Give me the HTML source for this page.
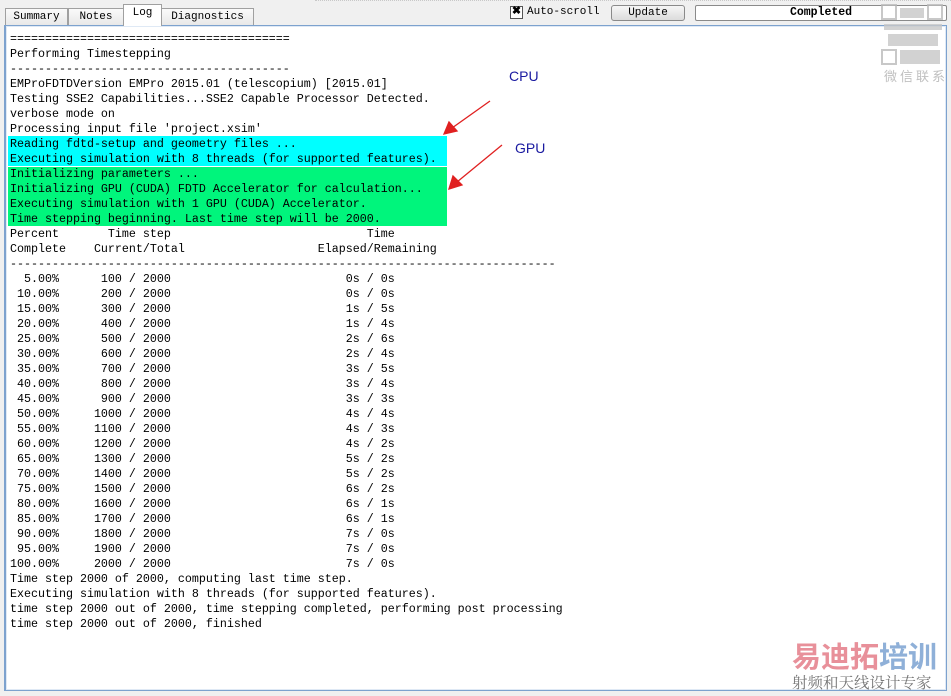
<!DOCTYPE html>
<html><head><meta charset="utf-8"><style>
body{margin:0;width:951px;height:696px;background:#f0f0f0;position:relative;overflow:hidden;font-family:"Liberation Mono",monospace}
.topline{position:absolute;left:315px;top:0;width:640px;height:0;border-top:1px dotted #c8c8c8}
.tab{position:absolute;top:8px;height:16px;border:1px solid #a0a0a0;border-bottom:none;background:linear-gradient(#fafafa,#e8e8e8);font-size:11px;line-height:16px;text-align:center;color:#000}
.tab.sel{top:4px;height:21px;background:#fff;z-index:2}
.log{position:absolute;left:4px;top:25px;width:940px;height:664px;border:1px solid #7da2ce;border-left:2px solid #7da2ce;background:#fff;box-shadow:inset 0 0 0 1px #dfe9f5}
pre{position:absolute;left:10px;top:32px;margin:0;font-family:"Liberation Mono",monospace;font-size:11.67px;line-height:15px;color:#000;z-index:2}
.hl{position:absolute;left:8px;width:439px}
.lbl{position:absolute;font-family:"Liberation Sans",Arial,sans-serif;font-size:14px;color:#1a1aa0}
.btn{position:absolute;top:5px;height:14px;border:1px solid #8a8a8a;border-radius:3px;background:linear-gradient(#f6f6f6,#dcdcdc);font-size:11px;line-height:14px;text-align:center}
</style></head><body>
<div class="topline"></div>
<div class="tab" style="left:5px;width:61px">Summary</div>
<div class="tab" style="left:68px;width:54px">Notes</div>
<div class="tab sel" style="left:123px;width:37px">Log</div>
<div class="tab" style="left:161px;width:91px">Diagnostics</div>
<div style="position:absolute;left:510px;top:6px;width:11px;height:11px;border:1px solid #555;background:#fff;font-size:11px;line-height:11px;text-align:center;font-weight:bold">✖</div>
<div style="position:absolute;left:527px;top:5px;font-size:11px;line-height:14px">Auto-scroll</div>
<div class="btn" style="left:611px;width:72px">Update</div>
<div class="btn" style="left:695px;width:250px;background:#fff;border-radius:2px;font-weight:bold;font-size:11.5px">Completed</div>
<div class="log"></div>
<div class="hl" style="top:136px;height:30px;background:#00ffff"></div>
<div class="hl" style="top:167px;height:59px;background:#00f57c"></div>
<pre>========================================
Performing Timestepping
----------------------------------------
EMProFDTDVersion EMPro 2015.01 (telescopium) [2015.01]
Testing SSE2 Capabilities...SSE2 Capable Processor Detected.
verbose mode on
Processing input file 'project.xsim'
Reading fdtd-setup and geometry files ...
Executing simulation with 8 threads (for supported features).
Initializing parameters ...
Initializing GPU (CUDA) FDTD Accelerator for calculation...
Executing simulation with 1 GPU (CUDA) Accelerator.
Time stepping beginning. Last time step will be 2000.
Percent       Time step                            Time
Complete    Current/Total                   Elapsed/Remaining
------------------------------------------------------------------------------
  5.00%      100 / 2000                         0s / 0s
 10.00%      200 / 2000                         0s / 0s
 15.00%      300 / 2000                         1s / 5s
 20.00%      400 / 2000                         1s / 4s
 25.00%      500 / 2000                         2s / 6s
 30.00%      600 / 2000                         2s / 4s
 35.00%      700 / 2000                         3s / 5s
 40.00%      800 / 2000                         3s / 4s
 45.00%      900 / 2000                         3s / 3s
 50.00%     1000 / 2000                         4s / 4s
 55.00%     1100 / 2000                         4s / 3s
 60.00%     1200 / 2000                         4s / 2s
 65.00%     1300 / 2000                         5s / 2s
 70.00%     1400 / 2000                         5s / 2s
 75.00%     1500 / 2000                         6s / 2s
 80.00%     1600 / 2000                         6s / 1s
 85.00%     1700 / 2000                         6s / 1s
 90.00%     1800 / 2000                         7s / 0s
 95.00%     1900 / 2000                         7s / 0s
100.00%     2000 / 2000                         7s / 0s
Time step 2000 of 2000, computing last time step.
Executing simulation with 8 threads (for supported features).
time step 2000 out of 2000, time stepping completed, performing post processing
time step 2000 out of 2000, finished</pre>
<div class="lbl" style="left:509px;top:68px">CPU</div>
<div class="lbl" style="left:515px;top:140px">GPU</div>
<svg style="position:absolute;left:0;top:0;z-index:3" width="951" height="696">
<g stroke="#e02020" stroke-width="1.3" fill="#e02020">
<line x1="490" y1="101" x2="452" y2="128"/><polygon points="444,134 449,122 457,131"/>
<line x1="502" y1="145" x2="457" y2="182"/><polygon points="449,189 453,176 462,185"/>
</g>
<g fill="#c8c8c8" opacity="0.8">
<rect x="882" y="5" width="14" height="14" fill="none" stroke="#bbb" stroke-width="2"/>
<rect x="928" y="5" width="14" height="14" fill="none" stroke="#bbb" stroke-width="2"/>
<rect x="882" y="50" width="14" height="14" fill="none" stroke="#bbb" stroke-width="2"/>
<rect x="900" y="8" width="24" height="10"/><rect x="884" y="24" width="58" height="6"/>
<rect x="888" y="34" width="50" height="12"/><rect x="900" y="50" width="40" height="14"/>
</g>
<text x="884" y="81" font-family="Noto Sans CJK SC,sans-serif" font-size="13" fill="#c0c0c0" letter-spacing="3">微信联系</text>
<text x="792" y="667" font-family="Noto Sans CJK SC,sans-serif" font-size="29" font-weight="bold" fill="#e8909a">易迪拓</text>
<text x="879" y="667" font-family="Noto Sans CJK SC,sans-serif" font-size="29" font-weight="bold" fill="#8fb0d8">培训</text>
<text x="792" y="688" font-family="Noto Serif CJK SC,serif" font-size="15.5" fill="#777">射频和天线设计专家</text>
</svg>
</body></html>
